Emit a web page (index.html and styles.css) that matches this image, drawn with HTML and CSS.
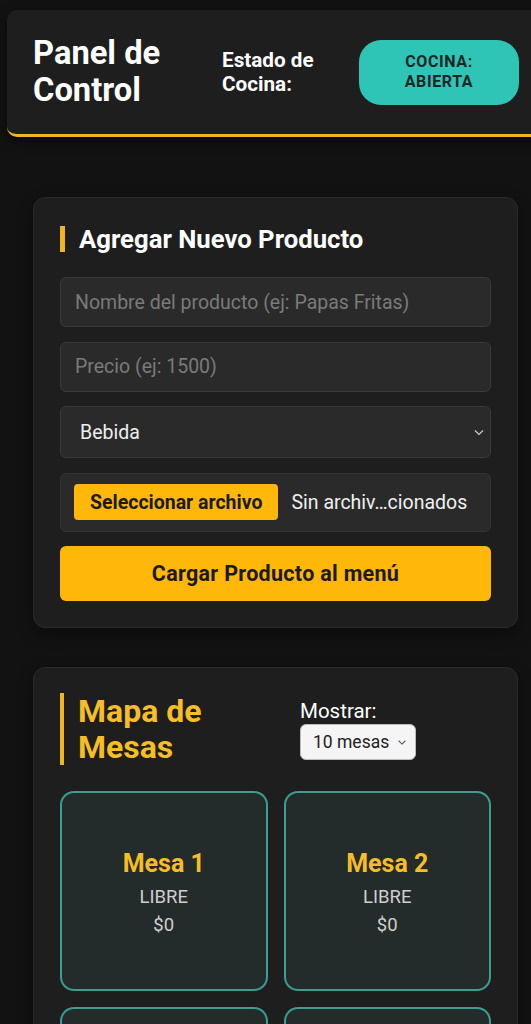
FILE: index.html
```html
<!DOCTYPE html>
<html lang="es">
<head>
    <meta charset="UTF-8">
    <meta name="viewport" content="width=device-width, initial-scale=1.0">
    <title>Panel de Control</title>
    <link rel="stylesheet" href="styles.css">
</head>
<body>
    <header class="top-bar">
        <h1 class="brand">Panel de Control</h1>
        <span class="status-label">Estado de Cocina:</span>
        <button class="status-badge">COCINA: ABIERTA</button>
    </header>

    <main class="content">
        <!-- Formulario de producto -->
        <section class="card">
            <h2 class="card-title">Agregar Nuevo Producto</h2>
            <form class="product-form">
                <input type="text" class="field" placeholder="Nombre del producto (ej: Papas Fritas)">
                <input type="text" class="field" placeholder="Precio (ej: 1500)">
                <div class="field select-field">
                    <span>Bebida</span>
                    <svg width="12" height="12" viewBox="0 0 12 12"><path d="M2 4.5 L6 8.5 L10 4.5" fill="none" stroke="#cfcfcf" stroke-width="1.2"/></svg>
                </div>
                <div class="file-field">
                    <span class="file-button">Seleccionar archivo</span>
                    <span class="file-name">Sin archiv…cionados</span>
                </div>
                <button type="button" class="submit-button">Cargar Producto al menú</button>
            </form>
        </section>

        <!-- Mapa de mesas -->
        <section class="card">
            <div class="map-head">
                <h2 class="map-title">Mapa de Mesas</h2>
                <div class="map-filter">
                    <span>Mostrar:</span>
                    <div class="small-select">
                        <span>10 mesas</span>
                        <svg width="10" height="10" viewBox="0 0 12 12"><path d="M2 4.5 L6 8.5 L10 4.5" fill="none" stroke="#555" stroke-width="1.3"/></svg>
                    </div>
                </div>
            </div>
            <div class="tables">
                <div class="table-tile"><h3>Mesa 1</h3><p>LIBRE</p><p>$0</p></div>
                <div class="table-tile"><h3>Mesa 2</h3><p>LIBRE</p><p>$0</p></div>
                <div class="table-tile"><h3>Mesa 3</h3><p>LIBRE</p><p>$0</p></div>
                <div class="table-tile"><h3>Mesa 4</h3><p>LIBRE</p><p>$0</p></div>
            </div>
        </section>
    </main>
</body>
</html>
```

FILE: styles.css
```css
/* Base */
* {
    margin: 0;
    padding: 0;
    box-sizing: border-box;
}

html, body {
    overflow-x: hidden;
}

body {
    font-family: Roboto, 'Noto Sans', sans-serif;
    background: #121212;
    color: #fff;
    padding-top: 10px;
}

/* Cabecera */
.top-bar {
    display: flex;
    align-items: center;
    width: 560px;
    height: 127px;
    margin-left: 7px;
    padding-left: 26px;
    background: #1e1e1e;
    border-bottom: 3px solid #f2b51f;
    border-radius: 10px;
    box-shadow: 0 4px 12px rgba(0, 0, 0, 0.5);
}

.brand {
    width: 189px;
    font-size: 32.7px;
    line-height: 37px;
    font-weight: 700;
}

.status-label {
    width: 137px;
    font-size: 20.7px;
    line-height: 24px;
    font-weight: 700;
}

.status-badge {
    width: 160px;
    height: 65px;
    padding: 0 36px;
    border: none;
    border-radius: 22px;
    background: #2ec4b6;
    color: #1b2624;
    font-family: inherit;
    font-size: 16px;
    line-height: 20px;
    font-weight: 700;
    letter-spacing: 0.6px;
}

/* Contenido */
.content {
    display: flex;
    flex-direction: column;
    gap: 39px;
    width: 485px;
    margin: 60px 0 0 33px;
}

.card {
    background: #1e1e1e;
    border: 1px solid #2a2a2a;
    border-radius: 12px;
    padding: 28px 26px 26px;
    box-shadow: 0 6px 16px rgba(0, 0, 0, 0.4);
}

.card-title {
    font-size: 25.7px;
    line-height: 26px;
    font-weight: 700;
    border-left: 5px solid #f2b51f;
    padding-left: 14px;
    margin-bottom: 25px;
}

.product-form {
    display: flex;
    flex-direction: column;
    gap: 14.5px;
}

.field {
    height: 50px;
    padding: 0 14px;
    background: #2a2a2a;
    border: 1px solid #3a3a3a;
    border-radius: 6px;
    color: #eee;
    font-family: inherit;
    font-size: 19.5px;
    outline: none;
}

.field::placeholder {
    color: #7a7a7a;
}

.select-field {
    display: flex;
    align-items: center;
    justify-content: space-between;
    height: 52px;
    padding: 0 5px 0 19px;
}

.select-field svg,
.small-select svg {
    flex-shrink: 0;
}

.file-field {
    display: flex;
    align-items: center;
    gap: 13px;
    height: 59px;
    padding: 0 13px;
    background: #2a2a2a;
    border: 1px solid #333;
    border-radius: 6px;
}

.file-button {
    display: inline-flex;
    align-items: center;
    height: 36px;
    padding: 0 16px;
    background: #ffb70a;
    border-radius: 4px;
    color: #1b1b1b;
    font-size: 19.5px;
    font-weight: 700;
    white-space: nowrap;
}

.file-name {
    font-size: 19.5px;
    color: #f0f0f0;
    white-space: nowrap;
}

.submit-button {
    height: 55px;
    border: none;
    border-radius: 6px;
    background: #ffb70a;
    color: #1b1b1b;
    font-family: inherit;
    font-size: 21.5px;
    font-weight: 700;
    letter-spacing: 0.3px;
}

/* Mapa de mesas */
.map-head {
    display: flex;
    align-items: flex-start;
    margin: -3px 0 26px;
}

.map-title {
    width: 240px;
    padding: 0 50px 0 14px;
    border-left: 4px solid #f2b51f;
    color: #f5bd26;
    font-size: 32px;
    line-height: 36px;
    font-weight: 700;
}

.map-filter {
    display: flex;
    flex-direction: column;
    gap: 1px;
    margin-top: 6px;
    font-size: 20.5px;
}

.small-select {
    display: flex;
    align-items: center;
    justify-content: space-between;
    width: 116px;
    height: 36px;
    padding: 0 8px 0 12px;
    background: #f5f5f5;
    border: 1px solid #bbb;
    border-radius: 6px;
    color: #222;
    font-size: 17.5px;
    white-space: nowrap;
}

.tables {
    display: grid;
    grid-template-columns: 1fr 1fr;
    gap: 16px;
}

.table-tile {
    display: flex;
    flex-direction: column;
    align-items: center;
    justify-content: center;
    height: 200px;
    padding-top: 6px;
    background: #232b2b;
    border: 2px solid #3a9e90;
    border-radius: 14px;
}

.table-tile h3 {
    color: #f5bd26;
    font-size: 25px;
    line-height: 30px;
    font-weight: 700;
    margin-bottom: 4px;
}

.table-tile p {
    color: #cfcfcf;
    font-size: 18.5px;
    line-height: 28px;
}
```
